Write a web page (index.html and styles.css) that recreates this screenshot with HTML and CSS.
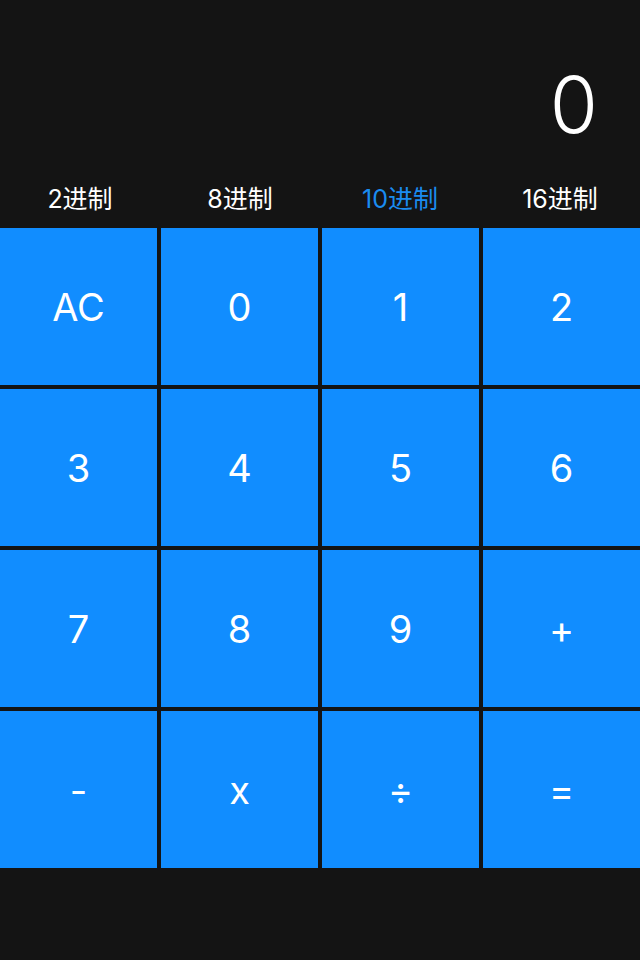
FILE: index.html
```html
<!DOCTYPE html>
<html lang="zh">
<head>
<meta charset="utf-8">
<link rel="stylesheet" href="styles.css">
</head>
<body>
<div class="app">
  <div class="display">0</div>
  <div class="tabs">
    <div class="tab">2进制</div>
    <div class="tab">8进制</div>
    <div class="tab active">10进制</div>
    <div class="tab">16进制</div>
  </div>
  <div class="keys">
    <div class="key">AC</div>
    <div class="key">0</div>
    <div class="key">1</div>
    <div class="key">2</div>
    <div class="key">3</div>
    <div class="key">4</div>
    <div class="key">5</div>
    <div class="key">6</div>
    <div class="key">7</div>
    <div class="key">8</div>
    <div class="key">9</div>
    <div class="key">+</div>
    <div class="key">-</div>
    <div class="key">x</div>
    <div class="key">÷</div>
    <div class="key">=</div>
  </div>
</div>
</body>
</html>
```
FILE: styles.css
```css
html, body {
  margin: 0;
  padding: 0;
  background: #141414;
}
.app {
  width: 640px;
  height: 960px;
  background: #141414;
  font-family: Inter, "Noto Sans CJK SC", sans-serif;
  color: #ffffff;
}
.display {
  height: 170px;
  box-sizing: border-box;
  padding: 50px 42px 0 0;
  text-align: right;
  font-size: 78px;
  line-height: 110px;
  font-weight: 350;
}
.tabs {
  height: 58px;
  display: grid;
  grid-template-columns: repeat(4, 1fr);
  align-items: center;
}
.tab {
  text-align: center;
  font-size: 25px;
  line-height: 56px;
  font-weight: 400;
}
.tab.active {
  color: #1a8cf0;
}
.keys {
  display: grid;
  grid-template-columns: repeat(4, 157px);
  grid-auto-rows: 157px;
  gap: 4px;
}
.key {
  background: #118dff;
  display: flex;
  align-items: center;
  justify-content: center;
  font-size: 38px;
  font-weight: 400;
}
```
